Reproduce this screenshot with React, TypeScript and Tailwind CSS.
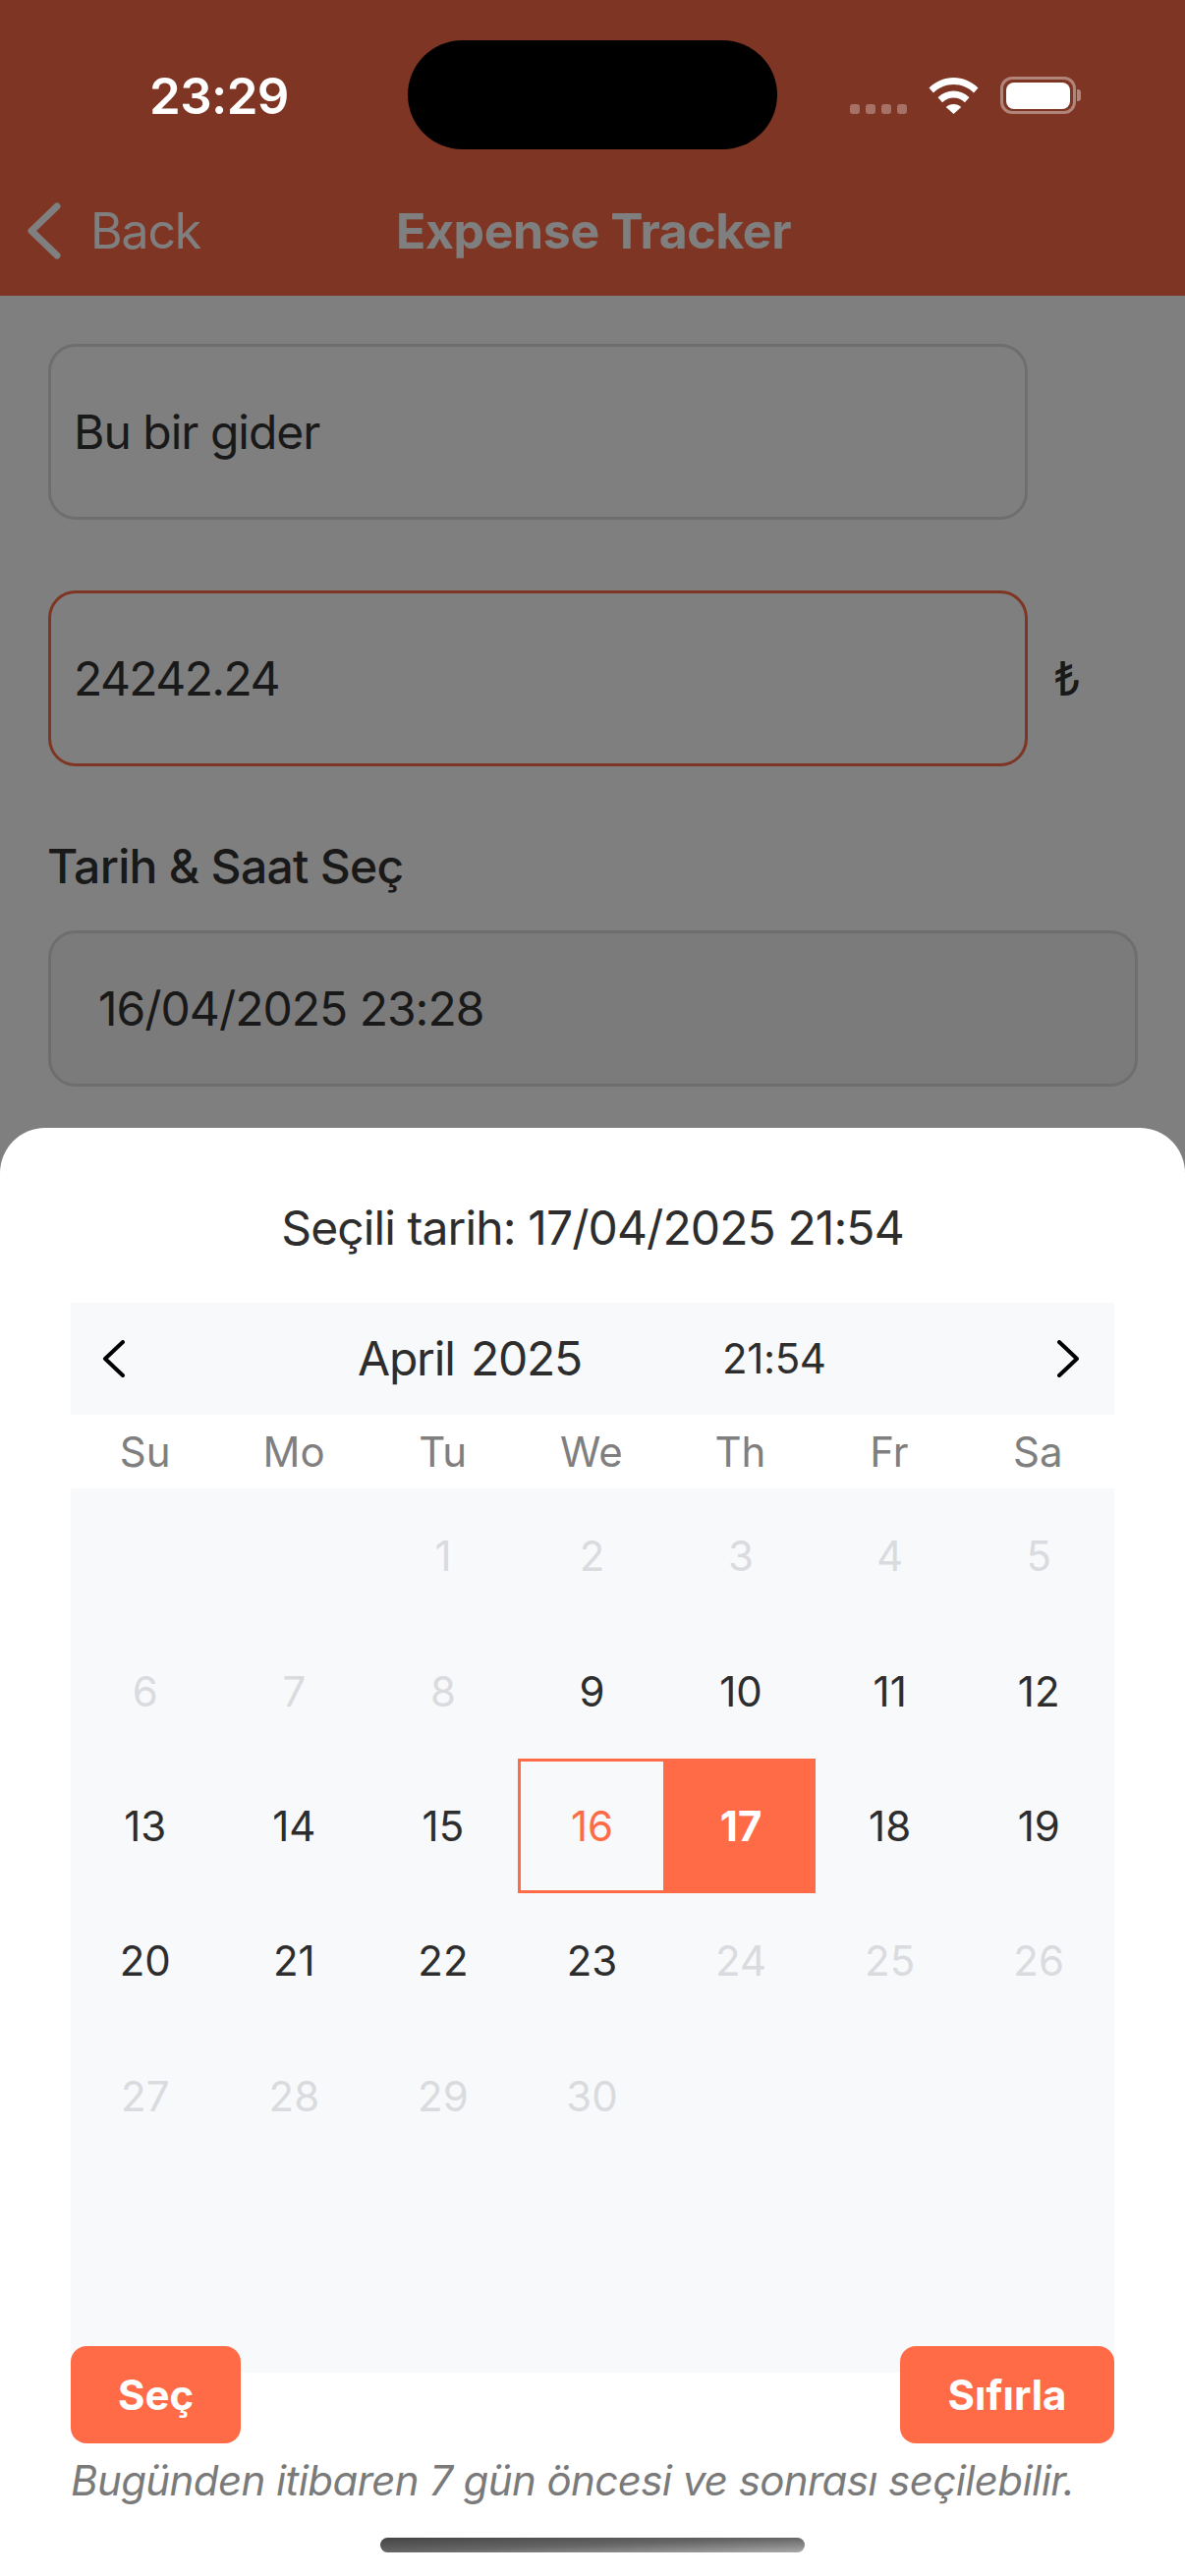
const WEEK_DAYS = ['Su', 'Mo', 'Tu', 'We', 'Th', 'Fr', 'Sa'];

type Day = { label: string; kind: 'empty' | 'off' | 'on' | 'today' | 'selected' };

const off = (label: string): Day => ({ label, kind: 'off' });
const on = (label: string): Day => ({ label, kind: 'on' });

const DAYS: Day[] = [
  { label: '', kind: 'empty' },
  { label: '', kind: 'empty' },
  ...['1', '2', '3', '4', '5', '6', '7', '8'].map(off),
  ...['9', '10', '11', '12', '13', '14', '15'].map(on),
  { label: '16', kind: 'today' },
  { label: '17', kind: 'selected' },
  ...['18', '19', '20', '21', '22', '23'].map(on),
  ...['24', '25', '26', '27', '28', '29', '30'].map(off),
];

function DayCell({ day }: { day: Day }) {
  if (day.kind === 'today') {
    return (
      <div className="flex h-[137.4px] items-center justify-center border-[3px] border-[#ff6b47] text-[#ff6b47]">
        {day.label}
      </div>
    );
  }
  if (day.kind === 'selected') {
    return (
      <div className="flex h-[137.4px] items-center justify-center bg-[#ff6b47] font-bold text-white">
        {day.label}
      </div>
    );
  }
  return (
    <div className={`flex h-[137.4px] items-center justify-center ${day.kind === 'off' ? 'text-[#d9dbde]' : 'text-[#2d2d2d]'}`}>
      {day.label}
    </div>
  );
}

function StatusBar() {
  return (
    <div className="absolute inset-x-0 top-0 flex h-[152px] text-white">
      <div className="w-[415px] pl-[152px] pt-[70px] text-[51px] leading-[56px] font-semibold tracking-[-0.6px]">23:29</div>
      <div className="mt-[41px] h-[111px] w-[376px] rounded-[56px] bg-black" />
      <div className="flex items-start pl-[74px] pt-[78px]">
        <div className="mt-[28px] flex gap-[6px]">
          <div className="h-[10px] w-[10px] rounded-[3px] bg-white/30" />
          <div className="h-[10px] w-[10px] rounded-[3px] bg-white/30" />
          <div className="h-[10px] w-[10px] rounded-[3px] bg-white/30" />
          <div className="h-[10px] w-[10px] rounded-[3px] bg-white/30" />
        </div>
        <svg className="ml-[22px] mt-[1px]" width="51" height="37" viewBox="0 0 50 37" fill="white">
          <path d="M25 0C15.5 0 7 3.6 0 10.5L4.5 15.5C10 10 17 7 25 7s15 3 20.5 8.500L50 10.500C43 3.600 34.500 0 25 0Z" />
          <path d="M25 13.500C19 13.500 13.500 15.800 9 20.200l4.600 5C16.600 22.300 20.600 20.600 25 20.600s8.400 1.700 11.400 4.600l4.600-5C36.500 15.800 31 13.500 25 13.500Z" />
          <path d="M25 27c-3 0-5.700 1.100-7.800 3.100L25 37l7.800-6.900C30.700 28.100 28 27 25 27Z" />
        </svg>
        <div className="ml-[22px] flex items-center">
          <div className="flex h-[38px] w-[77px] items-center justify-center rounded-[12px] border-[3px] border-white/40">
            <div className="h-[27px] w-[65px] rounded-[8px] bg-white" />
          </div>
          <div className="ml-[1px] h-[12px] w-[4px] rounded-r-[3px] bg-white/40" />
        </div>
      </div>
    </div>
  );
}

export default function App() {
  return (
    <div className="relative h-[2622px] w-[1206px] overflow-hidden bg-white font-[Inter,sans-serif] text-[#333]">
      {/* page under the sheet */}
      <div className="relative flex h-[301px] items-start bg-[#ff6b47] pt-[206px] text-white">
        <svg className="ml-[27px]" width="36" height="58" viewBox="0 0 36 58" fill="none" stroke="white" strokeWidth="7" strokeLinecap="round" strokeLinejoin="round">
          <path d="M31 4 5 29l26 25" />
        </svg>
        <div className="ml-[29px] mt-[-1px] text-[50px] leading-[60px] tracking-[-1.2px]">Back</div>
        <div className="absolute left-[403px] top-[205px] text-[50px] leading-[60px] font-bold tracking-[-0.4px]">Expense Tracker</div>
      </div>

      <div className="px-[49px] pt-[49px] text-[48px] tracking-[-1px]">
        <div className="flex h-[179px] w-[997px] items-center rounded-[28px] border-[3px] border-[#dcdcdc] pl-[23px]">Bu bir gider</div>
        <div className="mt-[72px] flex items-center">
          <div className="flex h-[179px] w-[997px] items-center rounded-[28px] border-[3px] border-[#ff6b47] pl-[23px] tracking-[-1.6px]">24242.24</div>
          <div className="ml-[26px]">₺</div>
        </div>
        <div className="-ml-[1px] mt-[72px] h-[60px] leading-[60px] font-medium tracking-[-0.7px]">Tarih &amp; Saat Seç</div>
        <div className="mt-[35px] flex h-[159px] w-[1109px] items-center rounded-[28px] border-[3px] border-[#dcdcdc] bg-[#f6f6f6] pl-[48px]">16/04/2025 23:28</div>
      </div>

      {/* scrim */}
      <div className="absolute inset-0 bg-black/50" />
      <StatusBar />

      {/* date picker sheet */}
      <div className="absolute inset-x-0 bottom-0 h-[1474px] rounded-t-[46px] bg-white px-[72px] pt-[73px]">
        <div className="text-center text-[48px] leading-[58px] tracking-[-0.9px] text-[#2d2d2d]">Seçili tarih: 17/04/2025 21:54</div>

        <div className="mt-[47px] flex h-[114px] items-center bg-[#f8f9fb] text-[#2d2d2d]">
          <svg className="ml-[32px]" width="24" height="38" viewBox="0 0 24 38" fill="none" stroke="black" strokeWidth="4" strokeLinecap="round" strokeLinejoin="round">
            <path d="M21 2 3 19l18 17" />
          </svg>
          <div className="ml-[236px] text-[48px] leading-[58px] tracking-[-1.2px] [word-spacing:4px]">April 2025</div>
          <div className="ml-[143px] text-[42px] leading-[58px] tracking-[-0.4px]">21:54</div>
          <svg className="ml-auto mr-[35px]" width="24" height="38" viewBox="0 0 24 38" fill="none" stroke="black" strokeWidth="4" strokeLinecap="round" strokeLinejoin="round">
            <path d="M3 2l18 17L3 36" />
          </svg>
        </div>

        <div className="grid h-[75px] grid-cols-7 items-center pr-[2px] text-center text-[42px] text-[#7f7f7f]">
          {WEEK_DAYS.map((name) => (
            <div key={name}>{name}</div>
          ))}
        </div>

        <div className="h-[900px] bg-[#f8f9fb] pr-[1px] text-[42px]">
          <div className="grid grid-cols-7">
            {DAYS.map((day, i) => (
              <DayCell key={i} day={day} />
            ))}
          </div>
        </div>

        <div className="-mt-[27px] flex justify-between text-[42px] font-bold text-white">
          <div className="relative flex h-[99px] w-[173px] items-center justify-center rounded-[16px] bg-[#ff6b47]">Seç</div>
          <div className="relative flex h-[99px] w-[218px] items-center justify-center rounded-[16px] bg-[#ff6b47]">Sıfırla</div>
        </div>

        <div className="mt-[13px] text-[42px] leading-[50px] tracking-[-0.6px] text-[#7a7a7a] italic">Bugünden itibaren 7 gün öncesi ve sonrası seçilebilir.</div>

        <div className="absolute left-[387px] top-[1435px] h-[15px] w-[432px] rounded-full bg-gradient-to-br from-[#444] via-[#666] to-[#aaa]" />
      </div>
    </div>
  );
}
